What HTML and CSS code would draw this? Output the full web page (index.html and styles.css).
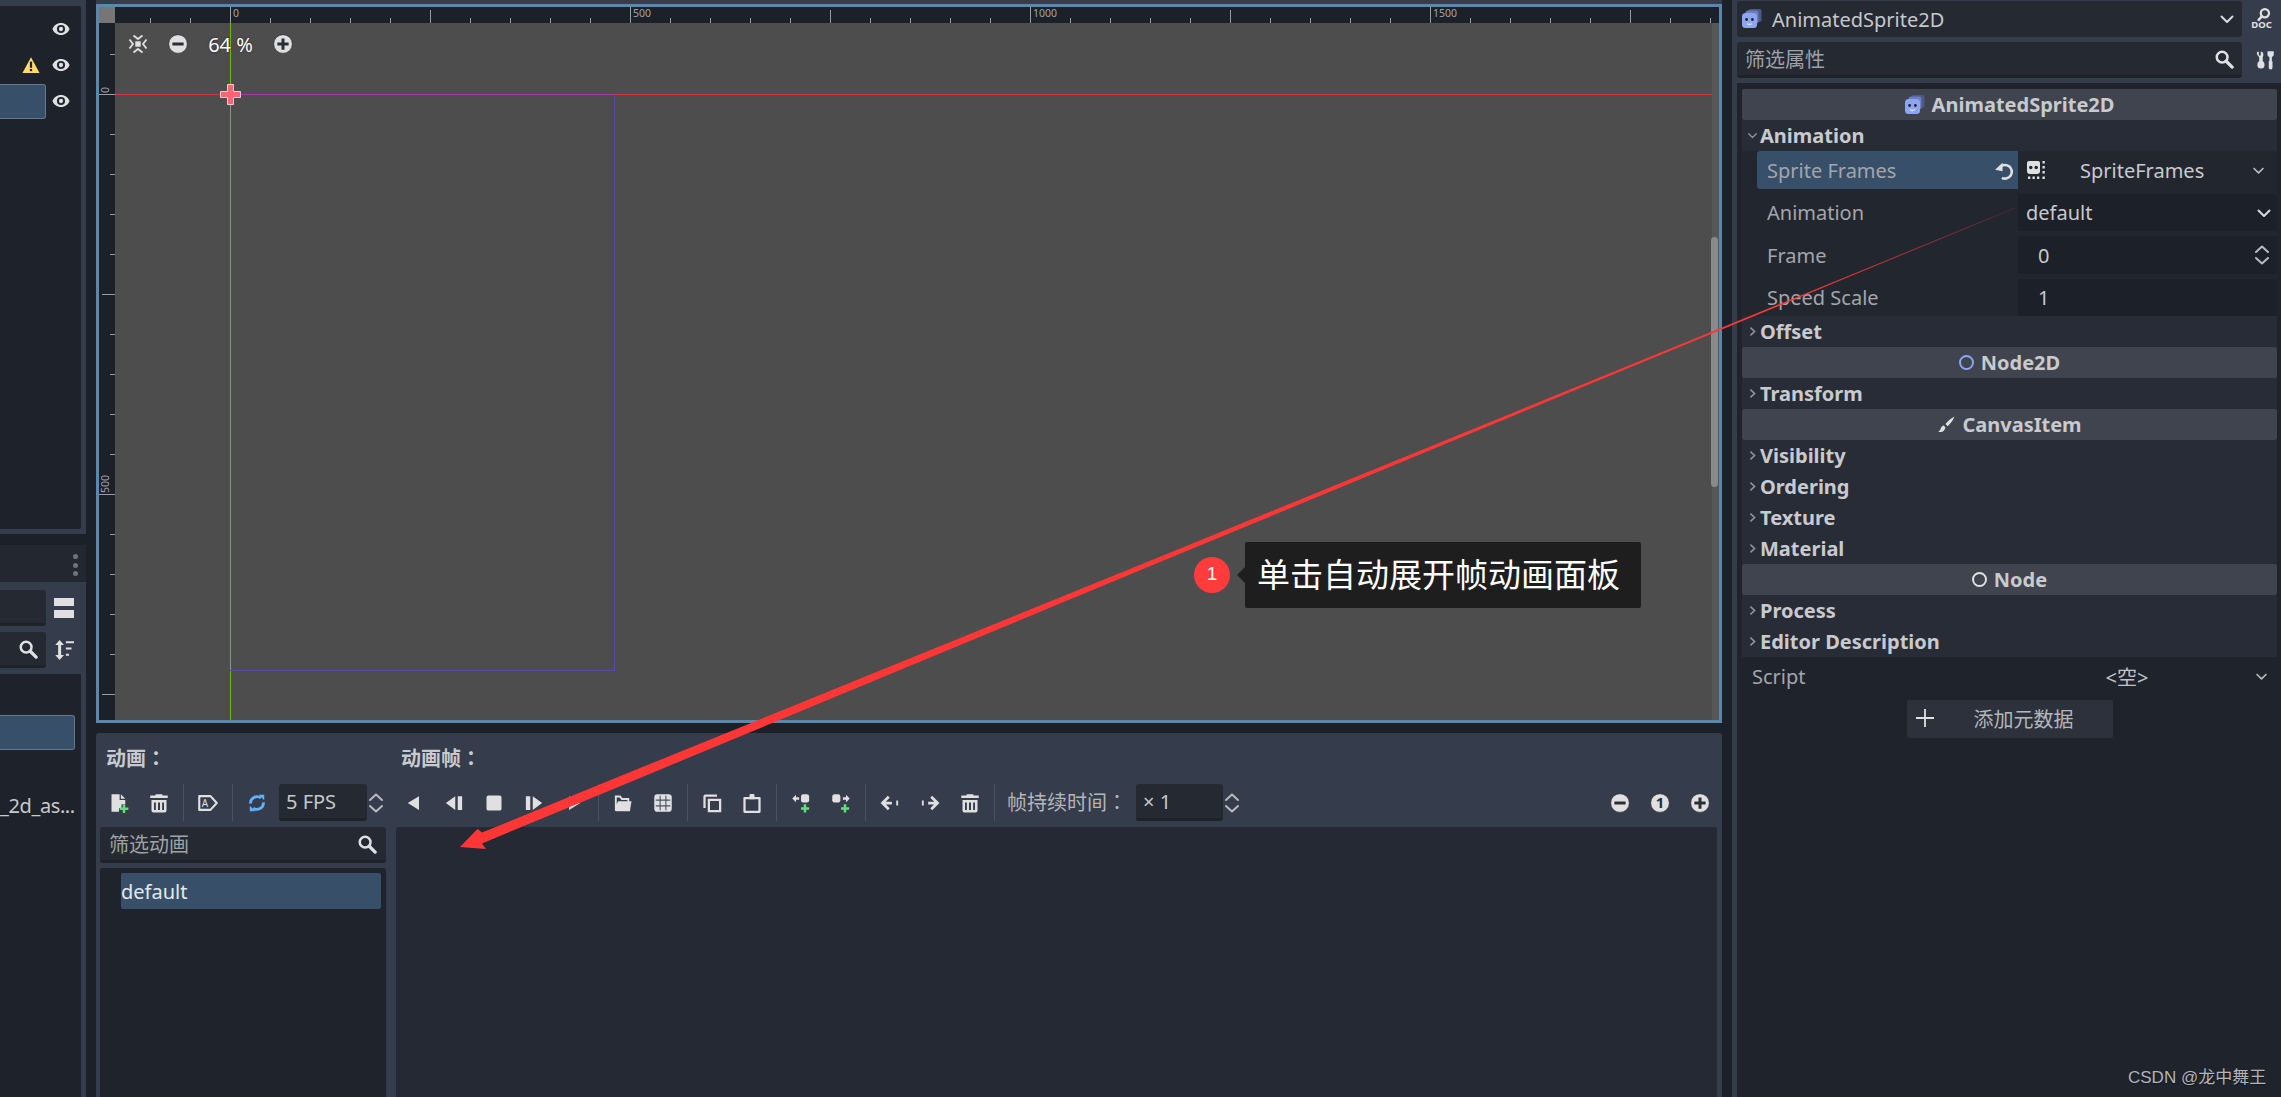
FILE: index.html
```html
<!DOCTYPE html>
<html lang="zh-CN">
  <head>
    <meta charset="UTF-8" />
    <title>Godot AnimatedSprite2D</title>
    <link rel="stylesheet" href="styles.css">
  </head>
  <body>
    <!-- shared icons -->
    <svg class="icon-defs" xmlns="http://www.w3.org/2000/svg">
      <symbol id="i-eye" viewBox="0 0 16 16"><path fill="currentColor" fill-rule="evenodd" d="M8 2.6C4.4 2.6 1.5 4.9.4 8c1.100 3.100 4 5.400 7.600 5.400s6.500-2.300 7.600-5.400C14.500 4.900 11.600 2.600 8 2.600zM8 4.400a3.600 3.600 0 1 1 0 7.200 3.600 3.600 0 0 1 0-7.200z"/><circle cx="8" cy="8" r="1.900" fill="currentColor"/></symbol>
      <symbol id="i-warn" viewBox="0 0 16 16"><path fill="#ffdc66" d="M8 1 15.600 15H.4z"/><rect x="7" y="5" width="2" height="5.500" fill="#20242c"/><rect x="7" y="11.500" width="2" height="2" fill="#20242c"/></symbol>
      <symbol id="i-search" viewBox="0 0 16 16"><circle cx="6.500" cy="6.500" r="4.300" fill="none" stroke="currentColor" stroke-width="2"/><path d="M9.800 9.800 14.500 14.500" stroke="currentColor" stroke-width="2.600" stroke-linecap="round"/></symbol>
      <symbol id="i-down" viewBox="0 0 16 16"><path d="M2.500 5.500 8 11l5.500-5.500" fill="none" stroke="currentColor" stroke-width="2" stroke-linecap="round" stroke-linejoin="round"/></symbol>
      <symbol id="i-right" viewBox="0 0 16 16"><path d="M5 2.500 11 8l-6 5.500" fill="none" stroke="currentColor" stroke-width="2.400"/></symbol>
      <symbol id="i-updown" viewBox="0 0 16 24"><path d="M2 9 8 3.500 14 9M2 15l6 5.500 6-5.500" fill="none" stroke="currentColor" stroke-width="2" stroke-linecap="round" stroke-linejoin="round"/></symbol>
      <symbol id="i-split" viewBox="0 0 20 20"><path fill="currentColor" d="M0 0h20v8H0zM0 12h20v8H0z"/></symbol>
      <symbol id="i-sort" viewBox="0 0 16 16"><path fill="currentColor" d="M4.500 0 8 4H5.700v8H8l-3.500 4L1 12h2.300V4H1zM9.500 1H16v1.600H9.500zM9.500 6h4.500v1.600H9.500zM9.500 11H12v1.600H9.500z"/></symbol>
      <symbol id="i-new" viewBox="0 0 16 16"><path fill="currentColor" d="M2 1h6.500v4.500H13V9h-3v3H8v3H2zM9.500 1 13 4.500H9.500z"/><path fill="#5fe07a" d="M11 9h2v2.500h2.500v2H13V16h-2v-2.500H8.500v-2H11z"/></symbol>
      <symbol id="i-trash" viewBox="0 0 16 16"><path fill="currentColor" fill-rule="evenodd" d="M5.500 1h5l.5 1H15v2H1V2h4zM2 5.500h12V14a1.500 1.500 0 0 1-1.500 1.500h-9A1.500 1.500 0 0 1 2 14zM4 7.500V13.500h1.500V7.500zM7.200 7.500V13.500h1.600V7.500zM10.500 7.500V13.500H12V7.500z"/></symbol>
      <symbol id="i-autoplay" viewBox="0 0 16 16"><path d="M1 2.500h9l5 5.500-5 5.500H1z" fill="none" stroke="currentColor" stroke-width="1.700" stroke-linejoin="round"/><text x="3" y="11" font-size="8" font-family="Noto Sans, sans-serif" fill="currentColor">A</text></symbol>
      <symbol id="i-loop" viewBox="-1 -1 18 18"><path d="M2.200 8.500A5.800 5.800 0 0 1 11.500 3.500M13.800 7.500A5.800 5.800 0 0 1 4.500 12.500" fill="none" stroke="#5fb2ff" stroke-width="2.500"/><path fill="#5fb2ff" d="M9.500 .5h5v5zM6.500 15.500h-5v-5z"/></symbol>
      <symbol id="i-back" viewBox="0 0 16 16"><path fill="currentColor" d="M12 2.500v11L3 8z"/></symbol>
      <symbol id="i-step-back" viewBox="0 0 16 16"><path fill="currentColor" d="M9 2.500v11L1.500 8zM11 2.500h3.500v11H11z"/></symbol>
      <symbol id="i-stop" viewBox="0 0 16 16"><rect x="2" y="2" width="12" height="12" rx="1.500" fill="currentColor"/></symbol>
      <symbol id="i-step" viewBox="0 0 16 16"><path fill="currentColor" d="M7 2.500v11L14.500 8zM1.500 2.500H5v11H1.500z"/></symbol>
      <symbol id="i-play" viewBox="0 0 16 16"><path fill="currentColor" d="M4 2.500v11L13 8z"/></symbol>
      <symbol id="i-folder" viewBox="0 0 16 16"><path fill="currentColor" fill-rule="evenodd" d="M1.500 2h4.500l1.500 2H13v2.500h1.800L13.500 14.500h-11A1 1 0 0 1 1.500 13.500zM3 3.500V9l1-2.500h7.500V5.500H6.800L5.300 3.500z"/></symbol>
      <symbol id="i-grid" viewBox="0 0 16 16"><rect x="1" y="1" width="14" height="14" rx="2.500" fill="currentColor"/><path d="M5.700 2.200v11.600M10.300 2.200v11.600M2.200 5.700h11.600M2.200 10.300h11.600" stroke="#4b5260" stroke-width=".9"/></symbol>
      <symbol id="i-copy" viewBox="0 0 16 16"><path d="M5.500 5.500h9v9h-9zM2 12V2.800c0-.5.300-.8.800-.8H12" fill="none" stroke="currentColor" stroke-width="1.800"/></symbol>
      <symbol id="i-paste" viewBox="0 0 16 16"><path d="M2 4h12v11H2z" fill="none" stroke="currentColor" stroke-width="1.800" stroke-linejoin="round"/><path fill="currentColor" d="M6 1.500c0-.500.500-.800 1-.800h2c.500 0 1 .300 1 .800V5H6z"/></symbol>
      <symbol id="i-ins-before" viewBox="0 0 16 16"><rect x="8" y="1" width="6.500" height="6.500" rx="1.800" fill="currentColor"/><path fill="currentColor" d="M1 4.300 4 1.300v2h2.500v2H4v2z"/><path fill="#5fe07a" d="M10.200 9h2v2.300h2.300v2h-2.300V15.600h-2v-2.300H8v-2h2.200z"/></symbol>
      <symbol id="i-ins-after" viewBox="0 0 16 16"><rect x="1" y="1" width="6.500" height="6.500" rx="1.800" fill="currentColor"/><path fill="currentColor" d="M15 4.300 12 1.300v2H9.500v2H12v2z"/><path fill="#5fe07a" d="M10.200 9h2v2.300h2.300v2h-2.300V15.600h-2v-2.300H8v-2h2.200z"/></symbol>
      <symbol id="i-move-left" viewBox="0 0 16 16"><path d="M7 3 2 8l5 5M2.500 8h7" fill="none" stroke="currentColor" stroke-width="2.200"/><path fill="currentColor" d="M13 6h1.500v4H13z"/></symbol>
      <symbol id="i-move-right" viewBox="0 0 16 16"><path d="M9 3l5 5-5 5M13.500 8h-7" fill="none" stroke="currentColor" stroke-width="2.200"/><path fill="currentColor" d="M1.500 6H3v4H1.500z"/></symbol>
      <symbol id="i-minus" viewBox="0 0 16 16"><circle cx="8" cy="8" r="7.500" fill="currentColor" stroke="#2a2e36" stroke-width=".6"/><rect x="3.500" y="6.800" width="9" height="2.400" fill="#2a2e36"/></symbol>
      <symbol id="i-plus" viewBox="0 0 16 16"><circle cx="8" cy="8" r="7.500" fill="currentColor" stroke="#2a2e36" stroke-width=".6"/><path fill="#2a2e36" d="M6.800 3.500h2.400v3.300h3.300v2.400H9.200v3.300H6.800V9.200H3.500V6.800h3.300z"/></symbol>
      <symbol id="i-one" viewBox="0 0 16 16"><circle cx="8" cy="8" r="7.500" fill="currentColor" stroke="#2a2e36" stroke-width=".6"/><text x="8" y="12.300" text-anchor="middle" font-size="12" font-weight="700" font-family="Noto Sans, sans-serif" fill="#2a2e36">1</text></symbol>
      <symbol id="i-center" viewBox="0 0 20 20"><rect x="7.300" y="7.300" width="5.400" height="5.400" fill="currentColor"/><path d="M5.500 1.500 10 5l4.500-3.500M5.500 18.500 10 15l4.500 3.500M1.500 5.500 5 10l-3.500 4.500M18.500 5.500 15 10l3.500 4.500" fill="none" stroke="currentColor" stroke-width="1.800"/></symbol>
      <symbol id="i-sprite" viewBox="0 0 20 20"><rect x="6.500" y="0" width="13" height="13" rx="2" fill="#4d5a85"/><rect x="3.500" y="1.500" width="13" height="13" rx="2.500" fill="#6a7dbd"/><rect x="0" y="4" width="15" height="15" rx="3.500" fill="#8da5f3"/><circle cx="4.600" cy="10.500" r="1.400" fill="#1f232c"/><circle cx="10.400" cy="10.500" r="1.400" fill="#1f232c"/><path d="M5 14.500c1.500 1.200 3.500 1.200 5 0" fill="none" stroke="#dfe6ff" stroke-width="1.300"/></symbol>
      <symbol id="i-frames" viewBox="0 0 18 18"><path fill="currentColor" d="M2 0h9a2 2 0 0 1 2 2v8a3 3 0 0 1-3 3H3a3 3 0 0 1-3-3V2a2 2 0 0 1 2-2z"/><circle cx="3.800" cy="6.500" r="1.700" fill="#1f232c"/><circle cx="9.200" cy="6.500" r="1.700" fill="#1f232c"/><path fill="currentColor" d="M15.500 0h2.300v2.500h-2.300zM15.500 5h2.300v2.500h-2.300zM15.500 10h2.300v2.500h-2.300zM1 15.500h2.300V18H1zM5.500 15.500h2.300V18H5.500zM10 15.500h2.300V18H10zM15.500 15.500h2.300V18h-2.300z"/></symbol>
      <symbol id="i-revert" viewBox="0 0 16 16"><path d="M4.500 5.500A5.200 5.200 0 1 1 6 13.600" fill="none" stroke="currentColor" stroke-width="2"/><path fill="currentColor" d="M.8 7.500 6.500 2v6.500z"/></symbol>
      <symbol id="i-tools" viewBox="0 0 16 16"><path fill="currentColor" d="M1.500 1h1.200v3h1.600V1h1.200c1 1 1.500 2.500.5 4.500V9c1 .5 1.500 1.500 1.500 3a3 3 0 0 1-6 0c0-1.500.5-2.500 1.500-3V5.500C1 3.500.5 2 1.500 1z" transform="translate(.5 .5) scale(.95)"/><path fill="currentColor" d="M10 1h5v2.500c0 1-.5 1.500-1.500 2V9h.5v5a1.500 1.500 0 0 1-3 0V9h.5V5.500C10.500 5 10 4.500 10 3.500z"/></symbol>
      <symbol id="i-brush" viewBox="0 0 16 16"><path fill="currentColor" d="M15.500.5c-2 1-5.500 3.500-8 6.500l2 2c3-2.500 5-5.500 6-8.500zM6 8.500c-2 .5-2.500 2-3 3.500-.3 1-1 1.500-2 1.500 1.500 1.300 5.500 1.500 6.500-3.200z"/></symbol>
      <symbol id="i-add" viewBox="0 0 16 16"><path fill="currentColor" d="M7.200 0h1.600v7.200H16v1.600H8.800V16H7.200V8.800H0V7.200h7.200z"/></symbol>
    </svg>

    <div class="left-dock">
      <div class="scene-panel">
        <div class="scene-tree">
          <div class="tree-row"><svg class="eye"><use href="#i-eye"/></svg></div>
          <div class="tree-row"><svg class="warn"><use href="#i-warn"/></svg><svg class="eye"><use href="#i-eye"/></svg></div>
          <div class="tree-row"><div class="row-selected"></div><svg class="eye"><use href="#i-eye"/></svg></div>
        </div>
      </div>
      <div class="file-panel">
        <div class="dock-head">
          <span class="dot"></span><span class="dot"></span><span class="dot"></span>
        </div>
        <div class="file-tools">
          <div class="file-input"></div>
          <svg class="icon"><use href="#i-split"/></svg>
        </div>
        <div class="file-tools">
          <div class="file-input"><svg class="icon"><use href="#i-search"/></svg></div>
          <svg class="icon"><use href="#i-sort"/></svg>
        </div>
        <div class="file-tree">
          <div class="file-selected"></div>
          <div class="file-name">_2d_as...</div>
        </div>
      </div>
    </div>

    <div class="center">
      <div class="viewport">
        <div class="ruler-corner"></div>
        <svg class="ruler-top">
          <line x1="0" x2="1604" y1="13.500" y2="13.500" class="tick" stroke-width="5" stroke-dasharray="1 39" stroke-dashoffset="-35"/>
          <path class="tick" d="M315.500 3v13M715.500 3v13M1115.500 3v13M1515.500 3v13M115.500 0v16M515.500 0v16M915.500 0v16M1315.500 0v16"/>
          <text x="118" y="10" class="ruler-text">0</text>
          <text x="518" y="10" class="ruler-text">500</text>
          <text x="918" y="10" class="ruler-text">1000</text>
          <text x="1318" y="10" class="ruler-text">1500</text>
        </svg>
        <svg class="ruler-left">
          <line y1="0" y2="697" x1="13.500" x2="13.500" class="tick" stroke-width="5" stroke-dasharray="1 39" stroke-dashoffset="-31"/>
          <path class="tick" d="M3 271.500h13M3 671.500h13M0 71.500h16M0 471.500h16"/>
          <text transform="translate(9.500 70) rotate(-90)" class="ruler-text">0</text>
          <text transform="translate(9.500 470) rotate(-90)" class="ruler-text">500</text>
        </svg>
        <div class="canvas">
          <svg class="guides">
            <path d="M0 71.500h115M499 71.500h1105" stroke="#d8354a" fill="none"/>
            <path d="M115 71.500h384" stroke="#a63aa0" fill="none"/>
            <path d="M115.500 0v71M115.500 647v50" stroke="#74b800" fill="none"/>
            <path d="M115.500 71v576" stroke="#7c9f7c" fill="none"/>
            <path d="M115 647.500h384.500V71" stroke="#5a4aa6" fill="none"/>
            <path d="M112.500 61.500h6v7h7v6h-7v7h-6v-7h-7v-6h7z" fill="#ff6472" stroke="#e8cfd2"/>
          </svg>
          <div class="zoom-bar">
            <span class="tool-btn"><svg class="icon"><use href="#i-center"/></svg></span>
            <span class="tool-btn"><svg class="icon"><use href="#i-minus"/></svg></span>
            <span class="zoom-value">64 %</span>
            <span class="tool-btn"><svg class="icon"><use href="#i-plus"/></svg></span>
          </div>
          <div class="scroll-track"><div class="scroll-thumb"></div></div>
          <div class="note">
            <span class="note-badge">1</span>
            <div class="note-box">单击自动展开帧动画面板</div>
          </div>
        </div>
      </div>

      <div class="frames-panel">
        <div class="frames-titles">
          <span class="frames-title">动画：</span>
          <span class="frames-title">动画帧：</span>
        </div>
        <div class="toolbar">
          <span class="tool-btn"><svg class="icon"><use href="#i-new"/></svg></span>
          <span class="tool-btn"><svg class="icon"><use href="#i-trash"/></svg></span>
          <span class="tool-sep"></span>
          <span class="tool-btn"><svg class="icon"><use href="#i-autoplay"/></svg></span>
          <span class="tool-sep"></span>
          <span class="tool-btn"><svg class="icon"><use href="#i-loop"/></svg></span>
          <span class="spin fps">5 FPS</span>
          <svg class="updown"><use href="#i-updown"/></svg>
          <span class="tool-btn first-play"><svg class="icon"><use href="#i-back"/></svg></span>
          <span class="tool-btn"><svg class="icon"><use href="#i-step-back"/></svg></span>
          <span class="tool-btn"><svg class="icon"><use href="#i-stop"/></svg></span>
          <span class="tool-btn"><svg class="icon"><use href="#i-step"/></svg></span>
          <span class="tool-btn"><svg class="icon"><use href="#i-play"/></svg></span>
          <span class="tool-sep"></span>
          <span class="tool-btn"><svg class="icon"><use href="#i-folder"/></svg></span>
          <span class="tool-btn"><svg class="icon"><use href="#i-grid"/></svg></span>
          <span class="tool-sep"></span>
          <span class="tool-btn"><svg class="icon"><use href="#i-copy"/></svg></span>
          <span class="tool-btn"><svg class="icon"><use href="#i-paste"/></svg></span>
          <span class="tool-sep"></span>
          <span class="tool-btn"><svg class="icon"><use href="#i-ins-before"/></svg></span>
          <span class="tool-btn"><svg class="icon"><use href="#i-ins-after"/></svg></span>
          <span class="tool-sep"></span>
          <span class="tool-btn"><svg class="icon"><use href="#i-move-left"/></svg></span>
          <span class="tool-btn"><svg class="icon"><use href="#i-move-right"/></svg></span>
          <span class="tool-btn"><svg class="icon"><use href="#i-trash"/></svg></span>
          <span class="tool-sep"></span>
          <span class="duration-label">帧持续时间：</span>
          <span class="spin duration">× 1</span>
          <svg class="updown"><use href="#i-updown"/></svg>
          <span class="tool-btn push-right"><svg class="icon"><use href="#i-minus"/></svg></span>
          <span class="tool-btn"><svg class="icon"><use href="#i-one"/></svg></span>
          <span class="tool-btn"><svg class="icon"><use href="#i-plus"/></svg></span>
        </div>
        <div class="frames-body">
          <div class="anim-col">
            <div class="anim-filter">
              <span>筛选动画</span>
              <svg class="icon"><use href="#i-search"/></svg>
            </div>
            <div class="anim-list">
              <div class="anim-item">default</div>
            </div>
          </div>
          <div class="frame-list"></div>
        </div>
      </div>
    </div>

    <div class="inspector">
      <div class="inspector-top">
        <div class="top-row">
          <div class="node-select">
            <svg class="sprite-icon"><use href="#i-sprite"/></svg>
            <span class="node-name">AnimatedSprite2D</span>
            <svg class="chevron"><use href="#i-down"/></svg>
          </div>
          <div class="doc-btn">
            <svg class="doc-glass" viewBox="0 0 16 12"><circle cx="9.500" cy="5" r="3.300" fill="none" stroke="currentColor" stroke-width="1.800"/><path d="M7 7.500 4 11" stroke="currentColor" stroke-width="2"/></svg>
            <span class="doc-text">DOC</span>
          </div>
        </div>
        <div class="top-row">
          <div class="prop-filter">
            <span>筛选属性</span>
            <svg class="icon"><use href="#i-search"/></svg>
          </div>
          <svg class="icon tools-icon"><use href="#i-tools"/></svg>
        </div>
      </div>

      <div class="inspector-body">
        <div class="class-head"><svg class="sprite-icon"><use href="#i-sprite"/></svg>AnimatedSprite2D</div>
        <div class="section"><svg class="arrow"><use href="#i-down"/></svg>Animation</div>
        <div class="props">
          <div class="prop active">
            <div class="prop-name">Sprite Frames<svg class="revert"><use href="#i-revert"/></svg></div>
            <div class="prop-value resource">
              <svg class="frames-icon"><use href="#i-frames"/></svg>
              <span class="resource-name">SpriteFrames</span>
              <svg class="small-chevron"><use href="#i-down"/></svg>
            </div>
          </div>
          <div class="prop">
            <div class="prop-name">Animation</div>
            <div class="prop-value field">default<svg class="chevron"><use href="#i-down"/></svg></div>
          </div>
          <div class="prop">
            <div class="prop-name">Frame</div>
            <div class="prop-value field number">0<svg class="updown"><use href="#i-updown"/></svg></div>
          </div>
          <div class="prop">
            <div class="prop-name">Speed Scale</div>
            <div class="prop-value field number">1</div>
          </div>
        </div>
        <div class="section"><svg class="arrow"><use href="#i-right"/></svg>Offset</div>
        <div class="class-head"><span class="ring blue"></span>Node2D</div>
        <div class="section"><svg class="arrow"><use href="#i-right"/></svg>Transform</div>
        <div class="class-head"><svg class="brush"><use href="#i-brush"/></svg>CanvasItem</div>
        <div class="section"><svg class="arrow"><use href="#i-right"/></svg>Visibility</div>
        <div class="section"><svg class="arrow"><use href="#i-right"/></svg>Ordering</div>
        <div class="section"><svg class="arrow"><use href="#i-right"/></svg>Texture</div>
        <div class="section"><svg class="arrow"><use href="#i-right"/></svg>Material</div>
        <div class="class-head"><span class="ring"></span>Node</div>
        <div class="section"><svg class="arrow"><use href="#i-right"/></svg>Process</div>
        <div class="section"><svg class="arrow"><use href="#i-right"/></svg>Editor Description</div>
        <div class="script-row">
          <span>Script</span>
          <span class="script-value">&lt;空&gt;</span>
          <svg class="small-chevron"><use href="#i-down"/></svg>
        </div>
        <div class="add-meta">
          <svg class="add-icon"><use href="#i-add"/></svg>
          <span>添加元数据</span>
        </div>
      </div>
    </div>

    <!-- red annotation arrow drawn over the screenshot -->
    <svg class="callout-arrow">
      <defs>
        <linearGradient id="arrow-fade" gradientUnits="userSpaceOnUse" x1="1800" y1="0" x2="2015" y2="0">
          <stop offset="0" stop-color="#ff3636"/>
          <stop offset="1" stop-color="#ff3636" stop-opacity="0.15"/>
        </linearGradient>
      </defs>
      <polygon fill="url(#arrow-fade)" points="2015,207.600 1700,336.600 1160,556.700 640,768.100 482,832.600 477.500,829 460,847 486,849 482,843.400 640,777.900 1160,562.100 1700,338.400 2015,208.400"/>
    </svg>

    <div class="watermark">CSDN @龙中舞王</div>
  </body>
</html>
```

FILE: styles.css
```css
* {
  box-sizing: border-box;
  margin: 0;
  padding: 0;
}

html,
body {
  height: 100%;
  overflow: hidden;
}

body {
  display: flex;
  gap: 10px;
  position: relative;
  background-color: #1c2028;
  font-family: "Noto Sans", "Noto Sans CJK JP", sans-serif;
  font-size: 20px;
  font-feature-settings: "locl" 0;
  color: #d0d2d5;
}

.icon-defs {
  display: none;
}

.icon {
  display: block;
  width: 20px;
  height: 20px;
  color: #e0e0e0;
}

/* left docks */
.left-dock {
  display: flex;
  flex-direction: column;
  gap: 11px;
  flex: 0 0 86px;
}

.scene-panel {
  height: 534px;
  padding: 6px 5px 5px 0;
  background-color: #353c4b;
}

.scene-tree {
  height: 100%;
  padding-top: 5px;
  background-color: #1e222a;
  border-radius: 0 3px 3px 0;
}

.tree-row {
  display: flex;
  align-items: center;
  justify-content: flex-end;
  gap: 12px;
  height: 36px;
  padding-right: 11px;
}

.eye {
  width: 18px;
  height: 18px;
  color: #e0e0e0;
}

.warn {
  width: 18px;
  height: 18px;
}

.row-selected {
  flex: 1;
  height: 35px;
  margin-right: -6px;
  background-color: #374f69;
  border: 1px solid #66788c;
  border-left: none;
  border-radius: 0 3px 3px 0;
}

.file-panel {
  flex: 1;
  display: flex;
  flex-direction: column;
  background-color: #353c4b;
}

.dock-head {
  display: flex;
  flex-direction: column;
  align-items: flex-end;
  gap: 3.500px;
  height: 37px;
  padding: 9px 8px 0 0;
  background-color: #232830;
}

.dot {
  width: 5px;
  height: 5px;
  border-radius: 50%;
  background-color: #6f737b;
}

.file-tools {
  display: flex;
  align-items: center;
  justify-content: space-between;
  height: 36px;
  margin-top: 8px;
  padding-right: 12px;
}

.file-tools + .file-tools {
  margin-top: 6px;
}

.file-input {
  display: flex;
  align-items: center;
  justify-content: flex-end;
  width: 46px;
  height: 36px;
  padding-right: 8px;
  background-color: #242932;
  border-bottom: 3px solid #1e2229;
  border-radius: 0 3px 3px 0;
}

.file-tree {
  flex: 1;
  margin-top: 6px;
  margin-right: 5px;
  padding-top: 41px;
  background-color: #1e222a;
}

.file-selected {
  width: 75px;
  height: 35px;
  background-color: #374f69;
  border: 1px solid #66788c;
  border-left: none;
  border-radius: 0 3px 3px 0;
}

.file-name {
  margin-top: 38px;
  width: 76px;
  line-height: 36px;
  letter-spacing: -0.4px;
  white-space: nowrap;
  color: #c8cacd;
}

/* centre: viewport and frames panel */
.center {
  display: flex;
  flex-direction: column;
  gap: 10px;
  flex: 0 0 1626px;
  padding-top: 4px;
  background: linear-gradient(#353c4b 4px, transparent 4px);
}

.viewport {
  display: grid;
  grid-template-columns: 16px 1fr;
  grid-template-rows: 16px 1fr;
  height: 719px;
  border: 3px solid #5a87ae;
  background-color: #1c2028;
}

.ruler-corner {
  background-color: #767676;
}

.ruler-top,
.ruler-left {
  display: block;
  width: 100%;
  height: 100%;
  background-color: #1c2028;
}

.tick {
  stroke: #9a9da1;
  fill: none;
}

.ruler-text {
  font-size: 10.500px;
  fill: #a0a3a7;
}

.canvas {
  position: relative;
  overflow: hidden;
  background-color: #4d4d4d;
}

.guides {
  position: absolute;
  inset: 0;
  width: 100%;
  height: 100%;
}

.zoom-bar {
  position: absolute;
  top: 1px;
  left: 3px;
  display: flex;
  align-items: center;
  height: 40px;
}

.zoom-value {
  width: 65px;
  text-align: center;
  color: #fff;
  text-shadow: 0 0 2px #222;
}

.tool-btn {
  display: flex;
  align-items: center;
  justify-content: center;
  flex: 0 0 40px;
  height: 37px;
}

.tool-sep {
  position: relative;
  flex: 0 0 9px;
}

.tool-sep::before {
  content: "";
  position: absolute;
  top: 0;
  bottom: 0;
  left: 4px;
  width: 1px;
  background-color: #4b5260;
}

.scroll-track {
  position: absolute;
  top: 0;
  right: 0;
  bottom: 0;
  width: 7px;
  background-color: #575757;
}

.scroll-thumb {
  width: 7px;
  height: 250px;
  margin-top: 214px;
  margin-left: -1px;
  background-color: #8a8a8a;
  border-radius: 4px;
}

.note {
  position: absolute;
  top: 519px;
  left: 1079px;
  display: flex;
  align-items: center;
  gap: 15px;
  height: 66px;
}

.note-badge {
  width: 36px;
  height: 36px;
  border-radius: 50%;
  background-color: #ff3b3b;
  color: #fff;
  font-family: "Liberation Sans", sans-serif;
  font-size: 19px;
  line-height: 34px;
  text-align: center;
}

.note-box {
  position: relative;
  width: 396px;
  height: 66px;
  padding-left: 12px;
  background-color: #1e1e1e;
  border-radius: 2px;
  color: #fff;
  font-family: "Liberation Sans", "Noto Sans CJK SC", sans-serif;
  font-size: 33px;
  line-height: 68px;
  white-space: nowrap;
}

.note-box::before {
  content: "";
  position: absolute;
  top: 25px;
  left: -8px;
  border-top: 8px solid transparent;
  border-bottom: 8px solid transparent;
  border-right: 8px solid #1e1e1e;
}

.frames-panel {
  flex: 1;
  display: flex;
  flex-direction: column;
  padding: 0 5px 0 4px;
  background-color: #353c4b;
  border-radius: 3px 3px 0 0;
}

.frames-titles {
  display: grid;
  grid-template-columns: 295px 1fr;
  height: 24px;
  margin-top: 14px;
  line-height: 24px;
}

.frames-title {
  padding-left: 6px;
  font-weight: 700;
  color: #c8cacd;
}

.toolbar {
  display: flex;
  align-items: stretch;
  height: 37px;
  margin: 13px -3px 0 -1px;
}

.spin {
  height: 37px;
  margin-left: 2px;
  padding-left: 7px;
  background-color: #242932;
  border-bottom: 3px solid #1e2229;
  border-radius: 3px;
  line-height: 35px;
  color: #c6c8cb;
}

.fps {
  flex: 0 0 88px;
}

.duration {
  flex: 0 0 87px;
  margin-left: 9px;
}

.updown {
  flex: 0 0 18px;
  width: 18px;
  height: 24px;
  align-self: center;
  color: #b9bbbf;
}

.first-play {
  margin-left: 9px;
}

.duration-label {
  margin-left: 8px;
  line-height: 37px;
  color: #b4b6ba;
  white-space: nowrap;
}

.push-right {
  margin-left: auto;
}

.frames-body {
  flex: 1;
  display: grid;
  grid-template-columns: 286px 1fr;
  gap: 10px;
  margin-top: 6px;
}

.anim-col {
  display: flex;
  flex-direction: column;
  gap: 5px;
}

.anim-filter,
.prop-filter {
  display: flex;
  align-items: center;
  justify-content: space-between;
  height: 36px;
  padding: 0 9px;
  background-color: #242932;
  border-bottom: 3px solid #1e2229;
  border-radius: 3px;
  color: #9fa2a7;
}

.anim-list {
  flex: 1;
  padding: 5px 5px 0 21px;
  background-color: #1f232c;
  border-radius: 3px 3px 0 0;
}

.anim-item {
  height: 36px;
  padding-left: 0;
  background-color: #374f69;
  border-radius: 2px;
  line-height: 37px;
  color: #e6e8ea;
}

.frame-list {
  background-color: #242933;
  border-radius: 3px 3px 0 0;
}

/* inspector */
.inspector {
  display: flex;
  flex-direction: column;
  flex: 1;
  border-left: 5px solid #353c4b;
  background-color: #1f232c;
}

.inspector-top {
  height: 83px;
  padding-top: 1px;
  background-color: #353c4b;
}

.top-row {
  display: flex;
  align-items: flex-start;
  height: 41px;
}

.node-select {
  display: flex;
  align-items: center;
  width: 505px;
  height: 36px;
  padding: 0 7px 0 5px;
  background-color: #242932;
  border-radius: 3px;
}

.sprite-icon {
  flex: 0 0 20px;
  width: 20px;
  height: 20px;
}

.node-name {
  flex: 1;
  margin-left: 10px;
  color: #c6c8cb;
}

.chevron {
  width: 16px;
  height: 16px;
  color: #d8dadc;
}

.doc-btn {
  flex: 1;
  display: flex;
  flex-direction: column;
  align-items: center;
  height: 36px;
  padding-top: 6px;
  color: #e0e0e0;
}

.doc-glass {
  width: 20px;
  height: 15px;
  margin-left: 3px;
}

.doc-text {
  margin-top: -2px;
  font-size: 9.500px;
  font-weight: 700;
  line-height: 10px;
}

.prop-filter {
  width: 505px;
  padding: 0 8px;
  border-radius: 3px;
}

.tools-icon {
  margin: 8px 0 0 13px;
}

.inspector-body {
  flex: 1;
  padding: 6px 4px 0 5px;
}

.class-head {
  display: flex;
  align-items: center;
  justify-content: center;
  gap: 7px;
  height: 31px;
  background-color: #3f444f;
  border-radius: 2px;
  font-weight: 700;
  color: #c8cacd;
}

.section {
  display: flex;
  align-items: center;
  gap: 2px;
  height: 31px;
  padding-left: 5px;
  background-color: #282c36;
  font-weight: 700;
  color: #c8cacd;
}

.arrow {
  width: 11px;
  height: 11px;
  color: #8e9196;
}

.props {
  display: flex;
  flex-direction: column;
  gap: 5px;
  padding-left: 15px;
  background-color: #22262f;
}

.prop {
  display: flex;
  height: 37.500px;
}

.prop-name {
  display: flex;
  align-items: center;
  justify-content: space-between;
  flex: 0 0 261px;
  padding: 1px 3px 0 10px;
  color: #a3a6ab;
}

.active .prop-name {
  background-color: #374f69;
  border-radius: 3px 0 0 3px;
}

.revert {
  width: 21px;
  height: 21px;
  color: #e0e0e0;
}

.prop-value {
  flex: 1;
  display: flex;
  align-items: center;
  padding-top: 1px;
  color: #c8cacd;
}

.field {
  justify-content: space-between;
  padding: 1px 5px 0 8px;
  background-color: #1c2028;
  border-radius: 2px;
}

.number {
  padding-left: 20px;
}

.number .updown {
  margin-right: 1px;
}

.resource {
  padding: 1px 12px 0 9px;
}

.frames-icon {
  flex: 0 0 18px;
  width: 18px;
  height: 18px;
  color: #e0e0e0;
}

.resource-name {
  flex: 1;
  margin-left: 35px;
}

.small-chevron {
  width: 13px;
  height: 13px;
  color: #b9bbbf;
}

.ring {
  width: 15px;
  height: 15px;
  border: 2.500px solid #e0e0e0;
  border-radius: 50%;
}

.ring.blue {
  border-color: #8da5f3;
}

.brush {
  width: 18px;
  height: 18px;
  color: #e0e0e0;
}

.script-row {
  display: flex;
  align-items: center;
  height: 38px;
  padding: 0 9px 0 10px;
  color: #a3a6ab;
}

.script-value {
  flex: 1;
  margin-left: 300px;
  color: #c0c2c5;
}

.add-meta {
  display: flex;
  align-items: center;
  width: 206px;
  height: 38px;
  margin: 5px auto 0;
  padding: 0 0 2px 9px;
  background-color: #2c313b;
  border-radius: 2px;
  color: #b4b6ba;
}

.add-icon {
  flex: 0 0 18px;
  width: 18px;
  height: 18px;
  margin-right: 40px;
  color: #e0e0e0;
}

/* overlays */
.callout-arrow {
  position: absolute;
  top: 0;
  left: 0;
  width: 2281px;
  height: 1097px;
  pointer-events: none;
}

.watermark {
  position: absolute;
  top: 1066px;
  left: 2128px;
  font-family: "Liberation Sans", "Noto Sans CJK SC", sans-serif;
  font-size: 17px;
  line-height: 24px;
  color: #b3b5b8;
  text-shadow: 0 1px 1px #15181e;
  white-space: nowrap;
}
```
